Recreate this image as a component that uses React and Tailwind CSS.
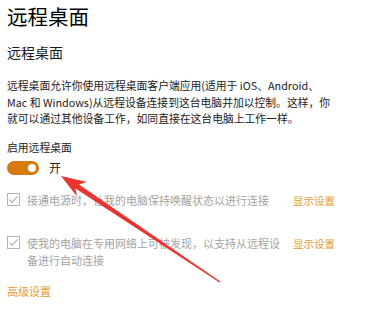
import { useState } from "react";

const font = { fontFamily: '"Noto Sans CJK SC", "Noto Sans", sans-serif' };

function CheckBox() {
  return (
    <span className="mt-[1px] flex h-[13px] w-[13px] shrink-0 items-center justify-center border border-[#b4b4b4] bg-white">
      <svg viewBox="0 0 12 12" className="h-[11px] w-[11px]">
        <path d="M1.8 6.2 L4.6 9 L10.4 2.6" fill="none" stroke="#a8a8a8" strokeWidth="1.2" />
      </svg>
    </span>
  );
}

function OptionRow({ lines, className }) {
  return (
    <div className={`flex w-[328px] items-start ${className}`}>
      <CheckBox />
      <p className="ml-[7px] w-[258px] whitespace-nowrap text-[11px] leading-[17px] text-[#a3a3a3]">
        {lines.map((l, i) => (
          <span key={i} className="block">{l}</span>
        ))}
      </p>
      <a className="ml-auto whitespace-nowrap pt-[1px] text-[10.5px] leading-[16px] text-[#e39a35]">显示设置</a>
    </div>
  );
}

export default function App() {
  const [on, setOn] = useState(true);

  return (
    <div className="relative h-[321px] w-[376px] overflow-hidden bg-white px-[7px] pt-[2px] text-[#1b1b1b]" style={font}>
      <h1 className="text-[20.5px] leading-[28px] font-normal text-black">远程桌面</h1>
      <h2 className="mt-[12px] text-[14px] leading-[20px] font-normal">远程桌面</h2>

      <p className="mt-[15px] whitespace-nowrap text-[10.8px] leading-[16.5px] text-[#222]">
        远程桌面允许你使用远程桌面客户端应用(适用于 iOS、Android、
        <br />
        Mac 和 Windows)从远程设备连接到这台电脑并加以控制。这样，你
        <br />
        就可以通过其他设备工作，如同直接在这台电脑上工作一样。
      </p>

      <div className="mt-[12px] text-[10.8px] leading-[16px] text-[#222]">启用远程桌面</div>

      <div className="mt-[6px] flex h-[14px] items-center gap-[10px]">
        <button
          onClick={() => setOn(!on)}
          className={`flex h-[14px] w-[32px] items-center rounded-full px-[3px] ${on ? "justify-end bg-[#d57a0c]" : "justify-start border border-[#555] bg-white"}`}
        >
          <span className={`h-[8px] w-[8px] rounded-full ${on ? "bg-white" : "bg-[#555]"}`} />
        </button>
        <span className="text-[12px] leading-[14px] text-[#222]">{on ? "开" : "关"}</span>
      </div>

      <OptionRow className="mt-[17px]" lines={["接通电源时，让我的电脑保持唤醒状态以进行连接"]} />
      <OptionRow
        className="mt-[26px]"
        lines={["使我的电脑在专用网络上可被发现，以支持从远程设", "备进行自动连接"]}
      />

      <a className="mt-[14px] block text-[11px] leading-[16px] text-[#e39a35]">高级设置</a>

      {/* red annotation arrow drawn over the page */}
      <svg className="pointer-events-none absolute left-0 top-0" width="376" height="321" viewBox="0 0 376 321">
        <polygon
          points="61,176 87,182 79,184.5 220.4,281.6 219.6,282.4 75.5,188.5 77,196.5"
          fill="#e8352f"
        />
      </svg>
    </div>
  );
}
